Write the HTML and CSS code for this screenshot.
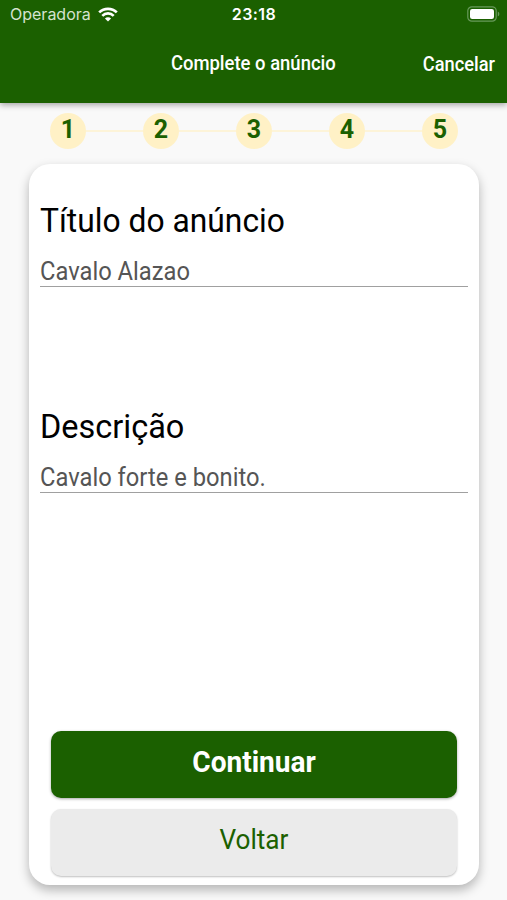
FILE: index.html
```html
<!DOCTYPE html>
<html lang="pt-BR">
<head>
    <meta charset="UTF-8">
    <meta name="viewport" content="width=device-width, initial-scale=1.0">
    <title>Complete o anúncio</title>
    <link rel="stylesheet" href="styles.css">
</head>
<body>
    <header class="header">
        <div class="status-bar">
            <div class="carrier">
                <span>Operadora</span>
                <svg class="wifi" viewBox="0 0 20 15" width="20" height="15">
                    <path d="M1.2 5.4a12.6 12.6 0 0 1 17.6 0" fill="none" stroke="#fff" stroke-width="2.7"/>
                    <path d="M4.3 8.8a8 8 0 0 1 11.4 0" fill="none" stroke="#fff" stroke-width="2.6"/>
                    <path d="M6.9 11.5a4.4 4.4 0 0 1 6.2 0L10 14.6z" fill="#fff"/>
                </svg>
            </div>
            <span class="clock">23:18</span>
            <svg class="battery" viewBox="0 0 33 16" width="33" height="16">
                <rect x="0.8" y="0.8" width="28.4" height="14.4" rx="4" fill="none" stroke="#68995a" stroke-width="1.2"/>
                <rect x="3" y="3" width="24" height="10" rx="2.2" fill="#fff"/>
                <path d="M30.8 5.6q1.6.7 1.6 2.4t-1.6 2.4z" fill="#68995a"/>
            </svg>
        </div>
        <div class="nav-bar">
            <h1 class="nav-title">Complete o anúncio</h1>
            <a class="cancel">Cancelar</a>
        </div>
    </header>

    <div class="steps">
        <span class="step">1</span>
        <span class="line"></span>
        <span class="step">2</span>
        <span class="line"></span>
        <span class="step">3</span>
        <span class="line"></span>
        <span class="step">4</span>
        <span class="line"></span>
        <span class="step">5</span>
    </div>

    <main class="card">
        <div class="field">
            <h2 class="label">Título do anúncio</h2>
            <div class="value"><span>Cavalo Alazao</span></div>
        </div>
        <div class="field">
            <h2 class="label label-desc">Descrição</h2>
            <div class="value"><span>Cavalo forte e bonito.</span></div>
        </div>
        <div class="actions">
            <button class="btn btn-primary"><span>Continuar</span></button>
            <button class="btn btn-secondary"><span>Voltar</span></button>
        </div>
    </main>
</body>
</html>
```

FILE: styles.css
```css
* {
    box-sizing: border-box;
}
body {
    margin: 0;
    height: 900px;
    overflow: hidden;
    background: #f9f9f9;
    font-family: Roboto, "Liberation Sans", sans-serif;
}
.header {
    height: 103px;
    background: #1b6000;
    color: #fff;
    box-shadow: 0 2px 6px rgba(0, 0, 0, 0.35);
}
.status-bar {
    display: grid;
    grid-template-columns: 1fr auto 1fr;
    align-items: center;
    height: 28px;
    padding: 0 7px 0 10px;
    font-family: Inter, "Liberation Sans", sans-serif;
    font-size: 16px;
}
.carrier {
    display: flex;
    align-items: center;
    gap: 7px;
    color: #d5e3cf;
}
.clock {
    margin-right: 2px;
    font-weight: 600;
    letter-spacing: 0.4px;
}
.battery {
    justify-self: end;
}
.nav-bar {
    display: grid;
    grid-template-columns: 1fr auto 1fr;
    align-items: center;
    height: 70px;
    padding: 0 12px;
}
.nav-title {
    grid-column: 2;
    margin: 0;
    font-size: 20px;
    font-weight: 500;
    transform: scaleX(0.923);
}
.cancel {
    justify-self: end;
    padding-top: 2px;
    font-size: 20px;
    font-weight: 500;
    transform: scaleX(0.915);
    transform-origin: right;
}
.steps {
    display: flex;
    align-items: center;
    height: 36px;
    margin: 10px 49px 0 50px;
}
.step {
    width: 36px;
    height: 36px;
    border-radius: 50%;
    background: #fff1c6;
    color: #1b6000;
    font-size: 25px;
    font-weight: 700;
    line-height: 33px;
    text-align: center;
}
.line {
    flex: 1;
    height: 2px;
    background: #fdf4d9;
}
.card {
    display: flex;
    flex-direction: column;
    height: 721px;
    margin: 15px 28px 0 29px;
    padding: 35px 11px 9px;
    border-radius: 21px;
    background: #fff;
    box-shadow: 0 5px 11px rgba(0, 0, 0, 0.28);
}
.field {
    height: 206px;
}
.label {
    margin: 0;
    color: #000;
    font-size: 34px;
    font-weight: 400;
    line-height: 42px;
    transform: scaleX(0.935);
    transform-origin: left;
}
.label-desc {
    transform: scaleX(0.955);
}
.value {
    height: 46px;
    padding-top: 16px;
    border-bottom: 1px solid #a0a0a0;
    color: #555;
    font-size: 25px;
    line-height: 29px;
}
.value span {
    display: inline-block;
    transform: scaleX(0.949);
    transform-origin: left;
}
.actions {
    display: flex;
    flex-direction: column;
    gap: 11px;
    margin: auto 11px 0;
}
.btn {
    height: 67px;
    padding: 0 0 7px;
    border: none;
    border-radius: 10px;
    font-family: inherit;
    box-shadow: 0 1px 3px rgba(0, 0, 0, 0.35);
}
.btn span {
    display: inline-block;
    transform: scaleX(0.935);
}
.btn-primary {
    background: #1b6000;
    color: #fff;
    font-size: 30px;
    font-weight: 700;
}
.btn-secondary {
    background: #ebebeb;
    color: #1b6000;
    font-size: 28px;
    box-shadow: 0 1px 2px rgba(0, 0, 0, 0.25);
}
```
